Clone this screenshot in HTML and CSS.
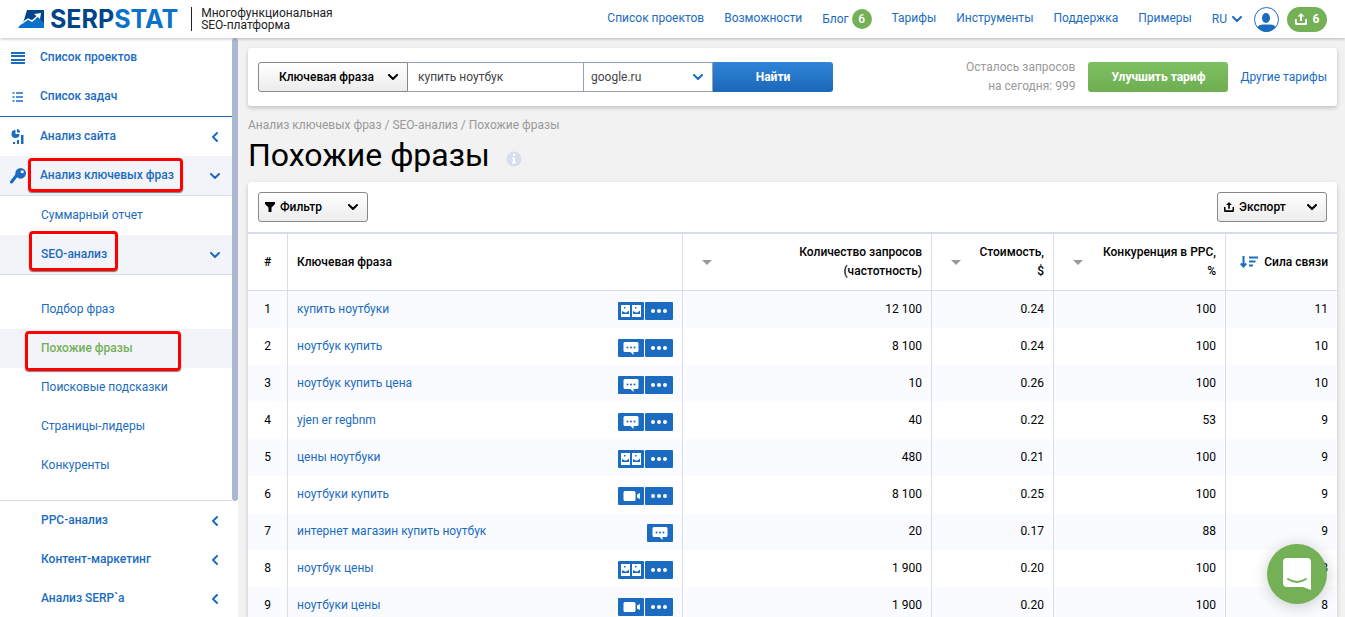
FILE: index.html
```html
<!DOCTYPE html>
<html lang="ru">

<head>
	<meta charset="utf-8">
	<meta name="viewport" content="width=device-width, initial-scale=1">
	<title>Похожие фразы</title>
	<link rel="stylesheet" href="styles.css">
</head>

<body>
	<!-- icon sprite -->
	<svg class="sprite" aria-hidden="true">
		<symbol id="chevron" viewBox="0 0 10 6"><path d="M1 1l4 4 4-4" fill="none" stroke="currentColor" stroke-width="2" stroke-linecap="round" stroke-linejoin="round"/></symbol>
		<symbol id="chevron-left" viewBox="0 0 6 10"><path d="M5 1L1 5l4 4" fill="none" stroke="currentColor" stroke-width="2" stroke-linecap="round" stroke-linejoin="round"/></symbol>
		<symbol id="upload" viewBox="0 0 12 12"><path d="M6 0L2.500 3.500H5V8h2V3.500h2.500zM0 6h1.800v4h8.400V6H12v4.500Q12 12 10.500 12h-9Q0 12 0 10.500z" fill="currentColor"/></symbol>
		<symbol id="pics" viewBox="0 0 26 18"><path d="M3 3h9v12H3zM14 3h9v12h-9z" fill="#fff"/><path d="M4 9l3 1.500h1.500L11 8.500V12H4zM15 9l3 1.500h1.500L22 8.500V12h-7zM6 5h1.500v1.500H6zM17 5h1.500v1.500H17z" fill="#1b6cc0"/></symbol>
		<symbol id="talk" viewBox="0 0 26 18"><path d="M7 3h12q1.500 0 1.500 1.500v7q0 1.500-1.500 1.500h-3.500v3l-3-3H7q-1.500 0-1.500-1.500v-7Q5.500 3 7 3z" fill="#fff"/><circle cx="9.500" cy="8.500" r="1" fill="#1b6cc0"/><circle cx="13" cy="8.500" r="1" fill="#1b6cc0"/><circle cx="16.500" cy="8.500" r="1" fill="#1b6cc0"/></symbol>
		<symbol id="video" viewBox="0 0 26 18"><path d="M7 4h9q1.500 0 1.500 1.500v7Q17.500 14 16 14H7q-1.500 0-1.500-1.500v-7Q5.500 4 7 4zM19 7.500L22 6v6l-3-1.500z" fill="#fff"/></symbol>
		<symbol id="dots" viewBox="0 0 28 18"><circle cx="8" cy="9" r="2" fill="#fff"/><circle cx="14" cy="9" r="2" fill="#fff"/><circle cx="20" cy="9" r="2" fill="#fff"/></symbol>
	</svg>

	<header class="header">
		<a class="logo" href="#">
			<svg width="26" height="18" viewBox="0 0 26 18" aria-hidden="true">
				<path d="M9 0h17v14l-5-4H6z" fill="#00458a"/>
				<path d="M0 18l7-9 6 1 8-2 5 5v5z" fill="#0a72c9"/>
				<path d="M3 14l7-5 4 2 7-6" fill="none" stroke="#fff" stroke-width="1.500"/>
				<path d="M16 4l7-1-1 6z" fill="#fff"/>
			</svg>
			<span class="logo-text">SERP<span>STAT</span></span>
		</a>
		<div class="tagline">Многофункциональная<br>SEO-платформа</div>
		<nav class="topnav">
			<a href="#">Список проектов</a>
			<a href="#">Возможности</a>
			<a class="blog" href="#">Блог <span class="badge">6</span></a>
			<a href="#">Тарифы</a>
			<a href="#">Инструменты</a>
			<a href="#">Поддержка</a>
			<a href="#">Примеры</a>
			<a class="lang" href="#">RU <svg width="10" height="6"><use href="#chevron"/></svg></a>
		</nav>
		<a class="avatar" href="#" aria-label="Профиль">
			<svg width="25" height="25" viewBox="0 0 25 25"><circle cx="12.500" cy="12.500" r="12" fill="#fff" stroke="#1b6cc0"/><ellipse cx="12" cy="11" rx="4" ry="5" fill="#1b6cc0"/><path d="M3.500 20q1-2.500 6-2.500h6q5 0 6 2.500-4 5-9 5t-9-5z" fill="#1b6cc0"/></svg>
		</a>
		<a class="upload" href="#"><svg width="12" height="12"><use href="#upload"/></svg>6</a>
	</header>

	<div class="page">
		<aside class="sidebar">
			<nav class="menu">
				<a class="item" href="#">
					<svg class="icon" width="16" height="12" viewBox="0 0 16 12"><path d="M1 1h14M1 4h14M1 8h14M1 11h14" stroke="currentColor" stroke-width="2"/></svg>
					<span>Список проектов</span>
				</a>
				<a class="item line-blue" href="#">
					<svg class="icon" width="16" height="12" viewBox="0 0 16 12"><path d="M2.500 2h2M6 2h7M2.500 6h2M6 6h7M2.500 10h2M6 10h7" stroke="currentColor" stroke-width="1.600"/></svg>
					<span>Список задач</span>
				</a>
				<a class="item" href="#">
					<svg class="icon" width="16" height="16" viewBox="0 0 14 16"><path d="M4.500 1v4h4a4 4 0 1 1-4-4z" fill="currentColor"/><path d="M6 0q3 0 3 3.500H6zM2 13h2v2H2zM6 11h2v4H6zM10 6h2.500v9H10z" fill="currentColor"/></svg>
					<span>Анализ сайта</span>
					<svg class="arrow" width="6" height="10"><use href="#chevron-left"/></svg>
				</a>
				<a class="item open" href="#">
					<svg class="icon" width="16" height="16" viewBox="0 0 15 15"><circle cx="10" cy="5" r="5" fill="currentColor"/><circle cx="11.500" cy="3.500" r="1.500" fill="#f3f4fa"/><path d="M6.500 6.500L1.500 13" stroke="currentColor" stroke-width="3" stroke-linecap="round"/></svg>
					<span class="mark">Анализ ключевых фраз</span>
					<svg class="arrow" width="10" height="6"><use href="#chevron"/></svg>
				</a>
				<a class="item sub" href="#"><span>Суммарный отчет</span></a>
				<a class="item open inner" href="#">
					<span class="mark mark-tall">SEO-анализ</span>
					<svg class="arrow" width="10" height="6"><use href="#chevron"/></svg>
				</a>
				<div class="submenu">
					<a class="item sub" href="#"><span>Подбор фраз</span></a>
					<a class="item current" href="#"><span class="mark mark-wide">Похожие фразы</span></a>
					<a class="item sub" href="#"><span>Поисковые подсказки</span></a>
					<a class="item sub" href="#"><span>Страницы-лидеры</span></a>
					<a class="item sub" href="#"><span>Конкуренты</span></a>
				</div>
				<a class="item inner" href="#"><span>PPC-анализ</span><svg class="arrow" width="6" height="10"><use href="#chevron-left"/></svg></a>
				<a class="item inner" href="#"><span>Контент-маркетинг</span><svg class="arrow" width="6" height="10"><use href="#chevron-left"/></svg></a>
				<a class="item inner" href="#"><span>Анализ SERP`a</span><svg class="arrow" width="6" height="10"><use href="#chevron-left"/></svg></a>
			</nav>
			<div class="scrollbar"><div class="thumb"></div></div>
		</aside>

		<main class="main">
			<form class="card search">
				<div class="select select-type">
					<select aria-label="Тип запроса"><option>Ключевая фраза</option></select>
					<svg width="10" height="6"><use href="#chevron"/></svg>
				</div>
				<input class="query" type="text" value="купить ноутбук" aria-label="Запрос">
				<div class="select select-engine">
					<select aria-label="Поисковая система"><option>google.ru</option></select>
					<svg width="10" height="6"><use href="#chevron"/></svg>
				</div>
				<button class="find" type="button">Найти</button>
				<p class="limits">Осталось запросов<br>на сегодня: 999</p>
				<button class="upgrade" type="button">Улучшить тариф</button>
				<a class="plans" href="#">Другие тарифы</a>
			</form>

			<div class="crumbs"><a href="#">Анализ ключевых фраз</a> / <a href="#">SEO-анализ</a> / Похожие фразы</div>
			<h1>Похожие фразы <svg width="16" height="16" viewBox="0 0 16 16"><circle cx="8" cy="8" r="7.500" fill="#d7ddef"/><path d="M7 3h2v2H7zM6 6.500h3V11h1v1.500H6V11h1V8H6z" fill="#fff"/></svg></h1>

			<section class="card report">
				<div class="toolbar">
					<button class="tool" type="button"><svg width="10" height="10" viewBox="0 0 10 10"><path d="M0 0h10v2L6.500 5.500V10h-3V5.500L0 2z" fill="currentColor"/></svg><span>Фильтр</span><svg width="10" height="6"><use href="#chevron"/></svg></button>
					<button class="tool" type="button"><svg width="10" height="10"><use href="#upload"/></svg><span>Экспорт</span><svg width="10" height="6"><use href="#chevron"/></svg></button>
				</div>
				<table>
					<colgroup>
						<col class="c-num">
						<col>
						<col class="c-count">
						<col class="c-cost">
						<col class="c-ppc">
						<col class="c-power">
					</colgroup>
					<thead>
						<tr>
							<th class="num">#</th>
							<th class="phrase">Ключевая фраза</th>
							<th><div class="sort"><i class="tri"></i><span>Количество запросов<br>(частотность)</span></div></th>
							<th><div class="sort"><i class="tri"></i><span>Стоимость,<br>$</span></div></th>
							<th><div class="sort"><i class="tri"></i><span>Конкуренция в PPC,<br>%</span></div></th>
							<th><div class="sort sorted"><svg width="18" height="12" viewBox="0 0 18 12"><path d="M3.500 0v10M.8 7.500l2.700 3 2.700-3" fill="none" stroke="#1b6cc0" stroke-width="2"/><path d="M9 1.500h9M9 5.500h6.500M9 9.500h4" stroke="#1b6cc0" stroke-width="2"/></svg><span>Сила связи</span></div></th>
						</tr>
					</thead>
					<tbody>
						<tr>
							<td class="num">1</td>
							<td class="phrase"><div><a href="#">купить ноутбуки</a><span class="tags"><svg width="26" height="18"><use href="#pics"/></svg><svg width="28" height="18"><use href="#dots"/></svg></span></div></td>
							<td>12 100</td><td>0.24</td><td>100</td><td>11</td>
						</tr>
						<tr>
							<td class="num">2</td>
							<td class="phrase"><div><a href="#">ноутбук купить</a><span class="tags"><svg width="26" height="18"><use href="#talk"/></svg><svg width="28" height="18"><use href="#dots"/></svg></span></div></td>
							<td>8 100</td><td>0.24</td><td>100</td><td>10</td>
						</tr>
						<tr>
							<td class="num">3</td>
							<td class="phrase"><div><a href="#">ноутбук купить цена</a><span class="tags"><svg width="26" height="18"><use href="#talk"/></svg><svg width="28" height="18"><use href="#dots"/></svg></span></div></td>
							<td>10</td><td>0.26</td><td>100</td><td>10</td>
						</tr>
						<tr>
							<td class="num">4</td>
							<td class="phrase"><div><a href="#">yjen er regbnm</a><span class="tags"><svg width="26" height="18"><use href="#talk"/></svg><svg width="28" height="18"><use href="#dots"/></svg></span></div></td>
							<td>40</td><td>0.22</td><td>53</td><td>9</td>
						</tr>
						<tr>
							<td class="num">5</td>
							<td class="phrase"><div><a href="#">цены ноутбуки</a><span class="tags"><svg width="26" height="18"><use href="#pics"/></svg><svg width="28" height="18"><use href="#dots"/></svg></span></div></td>
							<td>480</td><td>0.21</td><td>100</td><td>9</td>
						</tr>
						<tr>
							<td class="num">6</td>
							<td class="phrase"><div><a href="#">ноутбуки купить</a><span class="tags"><svg width="26" height="18"><use href="#video"/></svg><svg width="28" height="18"><use href="#dots"/></svg></span></div></td>
							<td>8 100</td><td>0.25</td><td>100</td><td>9</td>
						</tr>
						<tr>
							<td class="num">7</td>
							<td class="phrase"><div><a href="#">интернет магазин купить ноутбук</a><span class="tags"><svg width="26" height="18"><use href="#talk"/></svg></span></div></td>
							<td>20</td><td>0.17</td><td>88</td><td>9</td>
						</tr>
						<tr>
							<td class="num">8</td>
							<td class="phrase"><div><a href="#">ноутбук цены</a><span class="tags"><svg width="26" height="18"><use href="#pics"/></svg><svg width="28" height="18"><use href="#dots"/></svg></span></div></td>
							<td>1 900</td><td>0.20</td><td>100</td><td>8</td>
						</tr>
						<tr>
							<td class="num">9</td>
							<td class="phrase"><div><a href="#">ноутбуки цены</a><span class="tags"><svg width="26" height="18"><use href="#video"/></svg><svg width="28" height="18"><use href="#dots"/></svg></span></div></td>
							<td>1 900</td><td>0.20</td><td>100</td><td>8</td>
						</tr>
					</tbody>
				</table>
			</section>
		</main>
	</div>

	<button class="chat" type="button" aria-label="Чат">
		<svg width="28" height="32" viewBox="0 0 28 32"><path d="M4 0h20q4 0 4 4v28l-8-3H4q-4 0-4-4V4q0-4 4-4z" fill="#fff"/><path d="M5 21q9 6 18 0" fill="none" stroke="#73b056" stroke-width="2" stroke-linecap="round"/></svg>
	</button>
</body>

</html>
```

FILE: styles.css
```css
* {
	box-sizing: border-box;
}

body {
	margin: 0;
	height: 100vh;
	overflow: hidden;
	display: flex;
	flex-direction: column;
	background: #f2f2f2;
	color: #000;
	font: 12px/19px Roboto, "Open Sans", Arial, sans-serif;
}

a {
	color: #1b6cc0;
	text-decoration: none;
}

svg {
	flex: none;
	display: block;
}

button,
input,
select {
	font: inherit;
	color: inherit;
}

button {
	cursor: pointer;
}

.sprite {
	position: absolute;
	width: 0;
	height: 0;
}

/* header */

.header {
	position: relative;
	z-index: 2;
	flex: none;
	display: flex;
	align-items: center;
	height: 38px;
	padding: 0 18px;
	background: #fff;
	box-shadow: 0 1px 3px rgba(0, 0, 0, 0.25);
}

.logo {
	display: flex;
	align-items: center;
	gap: 6px;
}

.logo-text {
	font: 700 25px/24px Inter, Roboto, sans-serif;
	color: #00458a;
}

.logo-text span {
	color: #0a72c9;
}

.tagline {
	margin-left: 13px;
	padding-left: 9px;
	border-left: 1px solid #222;
	line-height: 12px;
	color: #222;
}

.topnav {
	display: flex;
	gap: 20px;
	margin-left: auto;
}

.blog,
.lang {
	display: flex;
	align-items: center;
	gap: 3px;
}

.lang {
	gap: 5px;
}

.badge {
	width: 20px;
	height: 20px;
	border-radius: 50%;
	background: #73b056;
	color: #fff;
	font-weight: 500;
	line-height: 20px;
	text-align: center;
}

.avatar {
	margin: 0 8px 0 12px;
}

.upload {
	display: flex;
	align-items: center;
	justify-content: center;
	gap: 6px;
	width: 40px;
	height: 25px;
	border-radius: 13px;
	background: #73b056;
	color: #fff;
	font-weight: 700;
}

/* sidebar */

.page {
	flex: 1;
	display: flex;
	min-height: 0;
}

.sidebar {
	flex: none;
	display: flex;
	width: 238px;
	background: #fff;
}

.menu {
	flex: 1;
}

.scrollbar {
	width: 6px;
}

.thumb {
	height: 80%;
	border-radius: 3px;
	background: #adb8d0;
}

.item {
	display: flex;
	align-items: center;
	height: 39px;
	padding: 0 12px 0 10px;
	font-weight: 500;
}

.item .icon {
	margin-right: 14px;
}

.item .arrow {
	width: 10px;
	margin-left: auto;
}

.line-blue {
	height: 40px;
	border-bottom: 1px solid #1b6cc0;
}

.open {
	height: 40px;
	border-bottom: 1px solid #d7ddeb;
	background: #f3f4fa;
}

.inner,
.sub,
.current {
	padding-left: 41px;
}

.sub {
	font-weight: 400;
}

.current {
	background: #f3f4fa;
	color: #73b056;
}

.submenu {
	padding: 15px 0;
	border-bottom: 1px solid #d7ddeb;
}

/* red frame round the menu text */
.mark {
	position: relative;
}

.mark::after {
	content: "";
	position: absolute;
	inset: -8px -9px -7px -12px;
	border: 3px solid #f00;
	border-radius: 4px;
	box-shadow: 0 1px 1px rgba(0, 0, 0, 0.5);
}

.mark-tall::after {
	inset: -14px -11px -7px -12px;
}

.mark-wide::after {
	inset: -8px -48px -13px -16px;
}

/* content */

.main {
	flex: 1;
	display: flex;
	flex-direction: column;
	min-width: 0;
	padding: 10px 8px 0 10px;
}

.card {
	border-radius: 3px;
	background: #fff;
	box-shadow: 0 2px 4px rgba(0, 0, 0, 0.2);
}

.search {
	flex: none;
	display: flex;
	align-items: center;
	height: 58px;
	padding: 0 10px;
}

.select {
	position: relative;
	height: 30px;
}

.select select {
	appearance: none;
	width: 100%;
	height: 100%;
	border: 1px solid #999fae;
	background: transparent;
	outline: none;
}

.select svg {
	position: absolute;
	top: 12px;
	right: 10px;
	pointer-events: none;
}

.select-type {
	width: 150px;
	font-weight: 500;
}

.select-type select {
	padding: 0 20px;
	border-color: #888;
	border-radius: 3px 0 0 3px;
	background: linear-gradient(#fff, #ececec);
}

.query {
	width: 175px;
	height: 30px;
	padding: 0 10px;
	border: solid #999fbe;
	border-width: 1px 0;
	color: #444;
	outline: none;
}

.select-engine {
	width: 130px;
	color: #1b6cc0;
}

.select-engine select {
	padding: 0 7px;
	border-color: #999fbe;
	color: #444;
}

.find,
.upgrade {
	height: 30px;
	border: 0;
	color: #fff;
	font-weight: 700;
}

.find {
	width: 120px;
	border-radius: 0 3px 3px 0;
	background: linear-gradient(#2f85d8, #1b67b8);
}

.limits {
	margin: 0 13px 0 auto;
	color: #999;
	text-align: right;
}

.upgrade {
	width: 140px;
	margin-right: 12px;
	border-radius: 3px;
	background: linear-gradient(#7dc062, #6fae52);
}

.crumbs {
	margin-top: 10px;
	color: #999;
}

.crumbs a {
	color: #999;
}

h1 {
	display: flex;
	align-items: center;
	gap: 16px;
	margin: 0 0 6px;
	font-size: 32px;
	line-height: 41px;
	font-weight: 400;
}

h1 svg {
	margin-top: 6px;
}

.report {
	flex: 1;
	min-height: 0;
}

.toolbar {
	display: flex;
	justify-content: space-between;
	padding: 10px;
}

.tool {
	display: flex;
	align-items: center;
	gap: 5px;
	width: 110px;
	height: 30px;
	padding: 0 9px 0 6px;
	border: 1px solid #888;
	border-radius: 3px;
	background: linear-gradient(#fff, #ececec);
	font-weight: 500;
}

.tool span {
	flex: 1;
	text-align: left;
}

table {
	width: 100%;
	border-top: 2px solid #d7ddeb;
	border-spacing: 0;
	table-layout: fixed;
}

.c-num {
	width: 40px;
}

.c-count {
	width: 249px;
}

.c-cost {
	width: 122px;
}

.c-ppc {
	width: 172px;
}

.c-power {
	width: 111px;
}

th,
td {
	height: 37px;
	padding: 0 9px;
	border-right: 1px solid #d7ddeb;
	text-align: right;
}

th:last-child,
td:last-child {
	border-right: 0;
}

th {
	height: 57px;
	border-bottom: 1px solid #d7ddeb;
	font-weight: 500;
}

tbody tr:nth-child(odd) {
	background: #fafbff;
}

th.num,
td.num {
	padding: 0;
	text-align: center;
}

th.phrase {
	text-align: left;
}

.phrase div,
.sort {
	display: flex;
	align-items: center;
	justify-content: space-between;
}

.sorted {
	justify-content: flex-end;
	gap: 6px;
}

.tri {
	margin-left: 10px;
	border: solid transparent;
	border-width: 5px 5px 0;
	border-top-color: #999;
}

.tags {
	display: flex;
	gap: 1px;
	margin-top: 2px;
}

.tags svg {
	border-radius: 1px;
	background: #1b6cc0;
}

/* chat launcher */

.chat {
	position: fixed;
	right: 18px;
	bottom: 13px;
	z-index: 3;
	display: flex;
	align-items: center;
	justify-content: center;
	width: 60px;
	height: 60px;
	padding: 0;
	border: 0;
	border-radius: 50%;
	background: #73b056;
	box-shadow: 0 2px 16px rgba(0, 0, 0, 0.2);
}
```
